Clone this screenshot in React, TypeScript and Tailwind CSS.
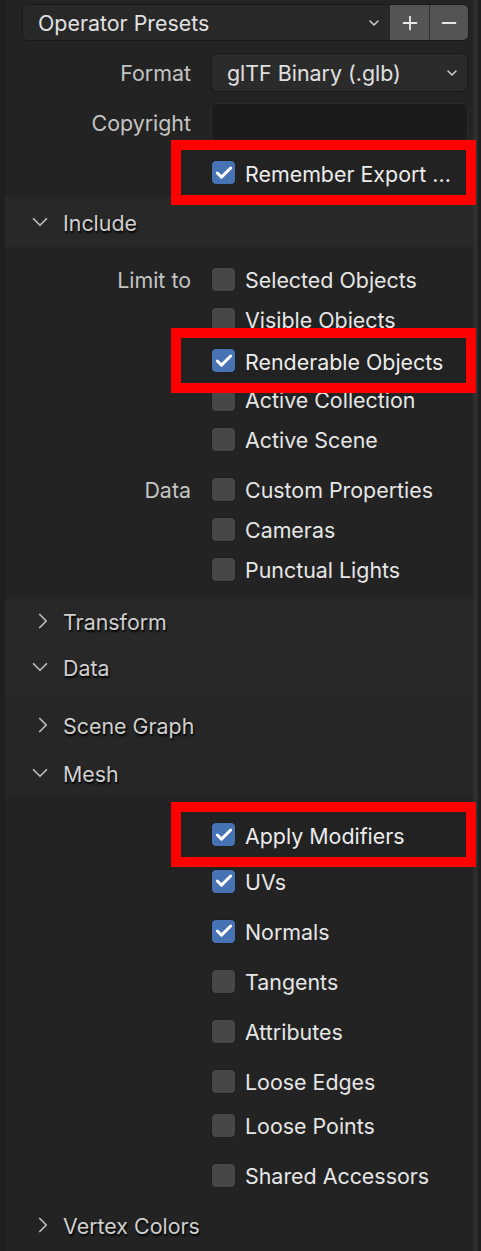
import { ChevronDown, ChevronRight, Check, Plus, Minus } from "lucide-react";

type Row = { label?: string; text: string; checked?: boolean; h: number; covered?: boolean };

function Box({ checked }: { checked?: boolean }) {
	return (
		<span
			className={`flex size-[25px] shrink-0 items-center justify-center rounded-[5px] border border-[#1e1e1e] ${
				checked ? "bg-[#4772b3]" : "bg-[#474747]"
			}`}
		>
			{checked && <Check className="size-[20px] text-white" strokeWidth={3.6} />}
		</span>
	);
}

function CheckRow({ label, text, checked, h, covered }: Row) {
	return (
		<div className={`flex items-center ${covered ? "invisible" : ""}`} style={{ height: h }}>
			<span className="w-[186px] shrink-0 pt-[4px] text-right text-[#c4c4c4]">{label}</span>
			<span className="ml-[20px] flex items-center gap-[9px]">
				<Box checked={checked} />
				<span className="pt-[4px] text-[#e6e6e6]">{text}</span>
			</span>
		</div>
	);
}

// red annotation frame laid over a row
function Marked({ text, top }: { text: string; top: number }) {
	return (
		<div
			className="absolute left-[171px] flex h-[65px] w-[305px] items-center gap-[9px] border-[10px] border-[#ff0000] bg-[#222222] pl-[30px]"
			style={{ top }}
		>
			<Box checked />
			<span className="pt-[4px] text-[#ececec]">{text}</span>
		</div>
	);
}

function Header({ title, open, h, className = "" }: { title: string; open?: boolean; h: number; className?: string }) {
	return (
		<div className={`flex items-center pl-[22px] text-[#cfcfcf] [text-shadow:1px_2px_2px_#000] ${className}`} style={{ height: h }}>
			{open ? (
				<ChevronDown className="size-[26px] text-[#bdbdbd]" strokeWidth={1.6} />
			) : (
				<ChevronRight className="ml-[3px] mr-[-3px] size-[26px] text-[#bdbdbd]" strokeWidth={1.6} />
			)}
			<span className="ml-[10px] pt-[4px]">{title}</span>
		</div>
	);
}

export default function App() {
	return (
		<div
			className="relative h-[1251px] w-[481px] overflow-hidden bg-[#1f1f1f] text-[21.4px] leading-none"
			style={{ fontFamily: "Inter, 'Noto Sans', sans-serif" }}
		>
			<div className="ml-[5px] mr-[7px] h-full bg-[#232323]">
				{/* top operator settings */}
				<div className="pt-[4px]">
					<div className="ml-[17px] mr-[5px] flex h-[37px] overflow-hidden rounded-[6px] border border-[#1a1a1a]">
						<div className="flex flex-1 items-center bg-[#282828] pl-[15px] pr-[8px] text-[#e0e0e0]">
							<span className="flex-1 pt-[3px]">Operator Presets</span>
							<ChevronDown className="size-[16px] text-[#d0d0d0]" strokeWidth={2.2} />
						</div>
						<div className="flex w-[40px] items-center justify-center border-r border-[#333] bg-[#545454]">
							<Plus className="size-[22px] text-[#e8e8e8]" strokeWidth={2} />
						</div>
						<div className="flex w-[38px] items-center justify-center bg-[#545454]">
							<Minus className="size-[22px] text-[#e8e8e8]" strokeWidth={2} />
						</div>
					</div>

					<div className="mt-[12px] flex h-[39px] items-center">
						<span className="w-[186px] pt-[3px] text-right text-[#c4c4c4]">Format</span>
						<div className="ml-[20px] mr-[6px] flex h-full flex-1 items-center rounded-[6px] border border-[#1a1a1a] bg-[#2b2b2b] pl-[15px] pr-[7px] text-[#e0e0e0]">
							<span className="flex-1 pt-[3px]">glTF Binary (.glb)</span>
							<ChevronDown className="size-[16px] text-[#d0d0d0]" strokeWidth={2.2} />
						</div>
					</div>

					<div className="mt-[11px] flex h-[38px] items-center">
						<span className="w-[186px] pt-[3px] text-right text-[#c4c4c4]">Copyright</span>
						<div className="ml-[20px] mr-[6px] h-full flex-1 rounded-[6px] border border-[#2a2a2a] bg-[#1b1b1b]" />
					</div>
					<div className="h-[56px]" />
				</div>

				{/* Include */}
				<Header title="Include" open h={50} className="bg-[#282828]" />
				<div className="pt-[12px]">
					<CheckRow label="Limit to" text="Selected Objects" h={40} />
					<CheckRow text="Visible Objects" h={40} />
					<CheckRow text="Renderable Objects" checked covered h={40} />
					<CheckRow text="Active Collection" h={40} />
					<CheckRow text="Active Scene" h={40} />
					<div className="h-[10px]" />
					<CheckRow label="Data" text="Custom Properties" h={40} />
					<CheckRow text="Cameras" h={40} />
					<CheckRow text="Punctual Lights" h={40} />
					<div className="h-[10px]" />
				</div>

				<div className="bg-[#282828] pb-[3px]">
					<Header title="Transform" h={44} />
					<Header title="Data" open h={48} />
				</div>

				<div className="bg-[#262626] pt-[7px]">
					<Header title="Scene Graph" h={48} />
					<Header title="Mesh" open h={48} />
				</div>
				<div className="pt-[14px]">
					<CheckRow text="Apply Modifiers" checked covered h={40} />
					<div className="h-[10px]" />
					<CheckRow text="UVs" checked h={40} />
					<div className="h-[10px]" />
					<CheckRow text="Normals" checked h={40} />
					<div className="h-[10px]" />
					<CheckRow text="Tangents" h={40} />
					<div className="h-[10px]" />
					<CheckRow text="Attributes" h={40} />
					<div className="h-[10px]" />
					<CheckRow text="Loose Edges" h={40} />
					<div className="h-[4px]" />
					<CheckRow text="Loose Points" h={40} />
					<div className="h-[10px]" />
					<CheckRow text="Shared Accessors" h={40} />
				</div>
				<Header title="Vertex Colors" h={60} />
			</div>

			{/* scrollbar */}
			<div className="absolute right-[3px] top-0 h-full w-[5px] bg-[#2e2e2e]" />

			<Marked text="Remember Export ..." top={140} />
			<Marked text="Renderable Objects" top={328} />
			<Marked text="Apply Modifiers" top={802} />
		</div>
	);
}
